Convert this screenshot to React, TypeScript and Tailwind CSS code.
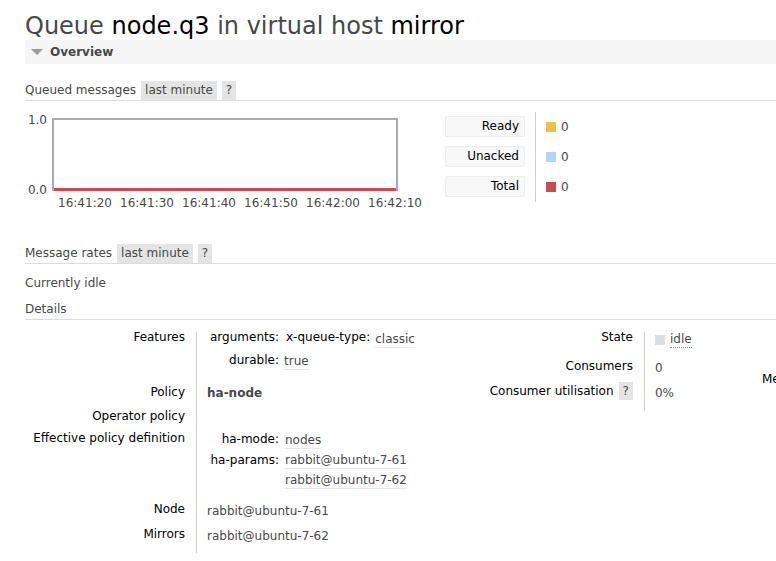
import React from "react";

const times = ["16:41:20", "16:41:30", "16:41:40", "16:41:50", "16:42:00", "16:42:10"];

const legend = [
  { label: "Ready", color: "bg-[#edc240]" },
  { label: "Unacked", color: "bg-[#afd8f8]" },
  { label: "Total", color: "bg-[#cb4b4b]" },
];

// small grey tag next to section titles
const Tag = ({ children }: { children: React.ReactNode }) => (
  <span className="h-[19px] leading-[19px] bg-[#e4e4e4] px-[4px]">{children}</span>
);

const Val = ({ children }: { children: React.ReactNode }) => (
  <span className="inline-block whitespace-nowrap leading-[15px] px-[1px] border-b border-[#e8e8e8] rounded-[2px]">{children}</span>
);

const SectionHead = ({ title }: { title: string }) => (
  <div className="flex items-end gap-[5px] border-b border-[#ddd]">
    <span className="leading-[19px]">{title}</span>
    <Tag>last minute</Tag>
    <Tag>?</Tag>
  </div>
);

const App = () => {
  return (
    <div className="w-[776px] h-[561px] overflow-hidden bg-white text-[12px] text-[#484848] font-['DejaVu_Sans',Verdana,sans-serif]">
      <div className="w-[820px] pl-[25px]">
        {/* title */}
        <h1 className="pt-[12px] text-[24px] leading-[28px] font-normal">
          Queue <span className="text-black">node.q3</span> in virtual host <span className="text-black">mirror</span>
        </h1>

        {/* overview bar */}
        <div className="h-[24px] bg-[#f5f5f5] flex items-center">
          <svg className="ml-[6px]" width="12" height="7" viewBox="0 0 12 7">
            <path d="M0 0 L12 0 L6 6 Z" fill="#9a9a9a" />
          </svg>
          <span className="ml-[7px] font-bold text-[#484848]">Overview</span>
        </div>

        <div className="mt-[17px]">
          <SectionHead title="Queued messages" />
        </div>

        {/* chart + legend */}
        <div className="flex mt-[11px]">
          <div className="w-[420px] pt-[1px]">
            <div className="flex">
              <div className="w-[22px] h-[84px] flex flex-col justify-between text-right leading-[14px]">
                <span>1.0</span>
                <span>0.0</span>
              </div>
              <div className="ml-[5px] mt-[5px] w-[346px] h-[73px] border-2 border-b-0 border-[#ababab] flex flex-col justify-end">
                <div className="h-[3px] bg-[#cb4b4b]" />
              </div>
            </div>
            <div className="flex ml-[29px] -mt-[1px] leading-[14px] whitespace-nowrap">
              {times.map((t) => (
                <span key={t} className="w-[62px] text-center">{t}</span>
              ))}
            </div>
          </div>
          <div className="flex">
            <div className="pt-[4px] flex flex-col gap-[9px]">
              {legend.map((l) => (
                <div key={l.label} className="w-[80px] h-[21px] bg-[#f8f8f8] border border-[#eee] rounded-[2px] text-right pr-[5px] leading-[19px] text-black">
                  {l.label}
                </div>
              ))}
            </div>
            <div className="ml-[10px] h-[90px] border-l border-[#ccc] pl-[10px] pt-[4px] flex flex-col gap-[9px]">
              {legend.map((l) => (
                <div key={l.label} className="h-[21px] flex items-center gap-[5px]">
                  <span className={`w-[10px] h-[10px] ${l.color}`} />
                  <span>0</span>
                </div>
              ))}
            </div>
          </div>
        </div>

        <div className="mt-[34px]">
          <SectionHead title="Message rates" />
        </div>

        <div className="mt-[11px] leading-[16px]">Currently idle</div>

        <div className="mt-[10px] leading-[16px] pb-[2px] border-b border-[#ddd]">Details</div>

        {/* details */}
        <div className="flex mt-[9px] leading-[16px]">
          {/* left table */}
          <div className="flex w-[415px]">
            <div className="w-[171px] pr-[11px] text-right text-black">
              <div className="h-[54px]">Features</div>
              <div className="h-[25px] pt-[1px]">Policy</div>
              <div className="h-[22px]">Operator policy</div>
              <div className="h-[71px]">Effective policy definition</div>
              <div className="h-[25px]">Node</div>
              <div className="h-[25px]">Mirrors</div>
            </div>
            <div className="mt-[3px] h-[221px] border-l border-[#ccc] pl-[10px]">
              <div className="-mt-[3px]">
                <div className="h-[54px]">
                  <div className="flex h-[23px] whitespace-nowrap">
                    <span className="w-[72px] shrink-0 text-right text-black">arguments:</span>
                    <span className="ml-[7px] text-black">x-queue-type:</span>
                    <span className="ml-[4px] pt-[2px]"><Val>classic</Val></span>
                  </div>
                  <div className="flex whitespace-nowrap">
                    <span className="w-[72px] shrink-0 text-right text-black">durable:</span>
                    <span className="ml-[4px] pt-[1px]"><Val>true</Val></span>
                  </div>
                </div>
                <div className="h-[25px] pt-[2px] font-bold">ha-node</div>
                <div className="h-[22px]" />
                <div className="h-[71px] pt-[1px]">
                  <div className="flex h-[21px] whitespace-nowrap">
                    <span className="w-[72px] shrink-0 text-right text-black">ha-mode:</span>
                    <span className="ml-[5px] pt-[1px]"><Val>nodes</Val></span>
                  </div>
                  <div className="flex whitespace-nowrap">
                    <span className="w-[72px] shrink-0 text-right text-black">ha-params:</span>
                    <span className="ml-[5px] flex flex-col items-start gap-[4px] pt-[1px]">
                      <Val>rabbit@ubuntu-7-61</Val>
                      <Val>rabbit@ubuntu-7-62</Val>
                    </span>
                  </div>
                </div>
                <div className="h-[25px] pt-[2px]">rabbit@ubuntu-7-61</div>
                <div className="h-[25px] pt-[2px]">rabbit@ubuntu-7-62</div>
              </div>
            </div>
          </div>

          {/* right table */}
          <div className="flex">
            <div className="w-[228px] pr-[11px] text-right text-black">
              <div className="h-[29px]">State</div>
              <div className="h-[25px]">Consumers</div>
              <div className="flex justify-end items-start gap-[5px]">
                <span>Consumer utilisation</span>
                <span className="-mt-[1px] h-[18px] leading-[18px] px-[4px] bg-[#e4e4e4] text-[#484848]">?</span>
              </div>
            </div>
            <div className="w-[90px] mt-[3px] h-[79px] border-l border-[#ccc] pl-[10px]">
              <div className="-mt-[3px]">
                <div className="h-[29px] flex items-start gap-[5px] pt-[6px]">
                  <span className="w-[10px] h-[10px] bg-[#ddd]" />
                  <span className="-mt-[6px] leading-[16px] pt-[2px] border-b border-dotted border-[#888]">idle</span>
                </div>
                <div className="h-[25px] pt-[2px]">0</div>
                <div className="pt-[2px]">0%</div>
              </div>
            </div>
            <div className="pl-[28px] mt-[42px] text-black whitespace-nowrap">Messages</div>
          </div>
        </div>
      </div>
    </div>
  );
};

export default App;
